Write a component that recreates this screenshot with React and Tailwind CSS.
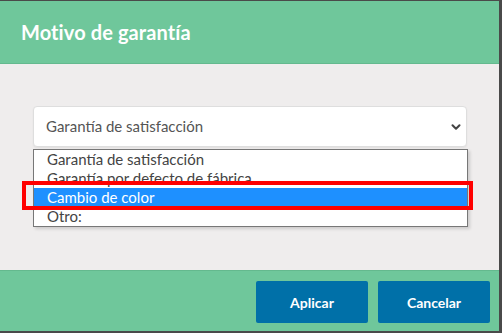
import { ChevronDown } from 'lucide-react';

const opciones = [
  'Garantía de satisfacción',
  'Garantía por defecto de fábrica',
  'Cambio de color',
  'Otro:',
];

export default function App() {
  return (
    <div className="w-[502px] h-[333px] bg-[#4a4a4a] pt-px pr-[3px] pb-[2px] font-['Lato','Noto_Sans',sans-serif]">
      <div className="w-[499px] h-[330px] flex flex-col bg-[#efeded]">
        {/* Header */}
        <div className="h-[63px] bg-[#6fc79b] border-b border-[#64b98e] flex items-center px-[21px]">
          <h1 className="text-[20px] font-bold text-white tracking-[0.1px]">Motivo de garantía</h1>
        </div>

        {/* Body */}
        <div className="flex-1 pt-[42px] px-[33px]">
          <div className="relative w-[434px]">
            <div className="h-[41px] bg-white border border-[#dedede] rounded-[4px] shadow-[0_1px_2px_rgba(0,0,0,0.06)] flex items-center justify-between pl-[12px] pr-[3px]">
              <span className="text-[15px] text-[#555]">Garantía de satisfacción</span>
              <ChevronDown size={14} strokeWidth={3.5} className="text-[#444]" />
            </div>

            {/* Lista desplegada */}
            <div className="absolute left-0 top-[43px] w-[435px] bg-white border border-[#777] shadow-[2px_2px_3px_rgba(0,0,0,0.15)]">
              {opciones.map((op, i) => (
                <div
                  key={op}
                  className={
                    i === 2
                      ? 'h-[19px] leading-[18px] pl-[13px] text-[15px] bg-[#1e90ff] text-white overflow-hidden'
                      : 'h-[19px] leading-[18px] pl-[13px] text-[15px] text-[#444] overflow-hidden'
                  }
                >
                  {op}
                </div>
              ))}
            </div>

            {/* Marco rojo */}
            <div className="absolute left-[-11px] top-[75px] w-[451px] h-[29px] border-[4px] border-[#ff0000] pointer-events-none" />
          </div>
        </div>

        {/* Footer */}
        <div className="h-[61px] bg-[#6fc79b] border-t border-[#64b98e] flex justify-end items-start gap-[10px] pt-[10px] pr-[9px]">
          <button className="w-[112px] h-[42px] bg-[#0070a8] rounded-[2px] text-white text-[14px] font-bold">Aplicar</button>
          <button className="w-[112px] h-[42px] bg-[#0070a8] rounded-[2px] text-white text-[14px] font-bold">Cancelar</button>
        </div>
      </div>
    </div>
  );
}
